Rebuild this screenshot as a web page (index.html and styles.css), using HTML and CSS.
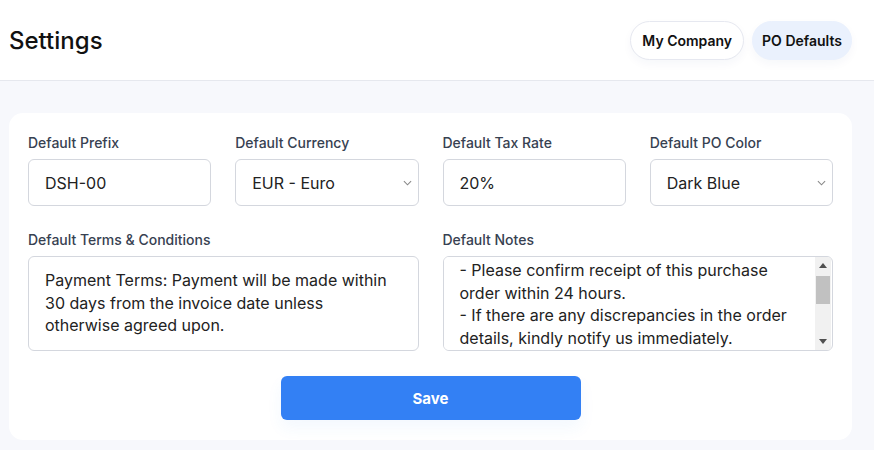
FILE: index.html
```html
<!DOCTYPE html>
<html lang="en">
<head>
  <meta charset="UTF-8" />
  <meta name="viewport" content="width=device-width, initial-scale=1" />
  <title>Settings</title>
  <link rel="stylesheet" href="styles.css">
</head>
<body>
  <header class="topbar">
    <h1>Settings</h1>
    <nav class="tabs">
      <button class="tab">My Company</button>
      <button class="tab active">PO Defaults</button>
    </nav>
  </header>

  <main class="content">
    <form class="card" onsubmit="return false">
      <div class="grid">
        <div class="field">
          <label for="prefix">Default Prefix</label>
          <input id="prefix" type="text" value="DSH-00" />
        </div>
        <div class="field">
          <label for="currency">Default Currency</label>
          <select id="currency">
            <option>EUR - Euro</option>
            <option>USD - US Dollar</option>
            <option>GBP - British Pound</option>
          </select>
        </div>
        <div class="field">
          <label for="tax">Default Tax Rate</label>
          <input id="tax" type="text" value="20%" />
        </div>
        <div class="field">
          <label for="color">Default PO Color</label>
          <select id="color">
            <option>Dark Blue</option>
            <option>Green</option>
            <option>Red</option>
          </select>
        </div>
        <div class="field wide">
          <label for="terms">Default Terms &amp; Conditions</label>
          <textarea id="terms">Payment Terms: Payment will be made within 30 days from the invoice date unless otherwise agreed upon.</textarea>
        </div>
        <div class="field wide">
          <label for="notes">Default Notes</label>
          <div class="notes-box">
            <textarea id="notes">- Please confirm receipt of this purchase order within 24 hours.
- If there are any discrepancies in the order details, kindly notify us immediately.
- Goods must be delivered to the address specified above.
- Invoices must reference this purchase order number.</textarea>
            <div class="scrollbar">
              <span class="sb-btn up"></span>
              <div class="sb-track"><div class="sb-thumb"></div></div>
              <span class="sb-btn down"></span>
            </div>
          </div>
        </div>
      </div>
      <div class="actions">
        <button class="save" type="submit">Save</button>
      </div>
    </form>
  </main>

  <script src="script.js"></script>
</body>
</html>
```

FILE: styles.css
```css
* {
  box-sizing: border-box;
}
body {
  margin: 0;
  font-family: Inter, "Noto Sans", sans-serif;
  background: #f7f8fc;
  color: #111;
}
.topbar {
  height: 81px;
  background: #fff;
  border-bottom: 1px solid #e6e8ee;
  display: flex;
  align-items: center;
  justify-content: space-between;
  padding: 0 22px 0 9px;
}
.topbar h1 {
  margin: 0;
  font-size: 24px;
  font-weight: 500;
}
.tabs {
  display: flex;
  gap: 8px;
  margin-top: 1px;
}
.tab {
  font-family: inherit;
  font-size: 14px;
  font-weight: 600;
  color: #111;
  height: 39px;
  padding: 0 11px;
  border-radius: 20px;
  border: 1px solid #e6e8f0;
  background: #fff;
  box-shadow: 0 4px 10px rgba(30, 60, 120, 0.04);
  cursor: pointer;
}
.tab.active {
  background: #eaf1fd;
  border-color: #eaf1fd;
  padding: 0 9px;
}
.content {
  padding: 32px 22px 10px 9px;
}
.card {
  background: #fff;
  border-radius: 14px;
  padding: 20px 19px 20px 19px;
}
.grid {
  display: grid;
  grid-template-columns: repeat(4, minmax(0, 1fr));
  column-gap: 24px;
  row-gap: 24px;
}
.field {
  display: flex;
  flex-direction: column;
  min-width: 0;
}
.field.wide {
  grid-column: span 2;
}
label {
  font-size: 14px;
  font-weight: 500;
  color: #374151;
  line-height: 20px;
  margin-bottom: 6px;
}
input,
select,
textarea {
  width: 100%;
  font-family: Inter, "Noto Sans", sans-serif;
  font-size: 16px;
  color: #222;
  border: 1px solid #d4d7de;
  border-radius: 6px;
  background: #fff;
  outline: none;
}
input,
select {
  height: 47px;
  padding: 0 16px;
}
select {
  appearance: none;
  -webkit-appearance: none;
  background-image: url("data:image/svg+xml,%3Csvg xmlns='http://www.w3.org/2000/svg' width='10' height='6' viewBox='0 0 10 6'%3E%3Cpath d='M1 1l4 4 4-4' fill='none' stroke='%23888' stroke-width='1.2'/%3E%3C/svg%3E");
  background-repeat: no-repeat;
  background-position: right 6px center;
  background-size: 9px 6px;
}
textarea {
  height: 95px;
  padding: 12px 16px;
  line-height: 22.5px;
  resize: none;
}
.notes-box {
  display: flex;
  height: 95px;
  border: 1px solid #d4d7de;
  border-radius: 6px;
  overflow: hidden;
  background: #fff;
}
.notes-box textarea {
  flex: 1;
  height: 100%;
  border: none;
  border-radius: 0;
  overflow: hidden;
  padding-top: 11px;
}
.scrollbar {
  width: 16px;
  margin-right: 1px;
  background: #f1f1f1;
  display: flex;
  flex-direction: column;
}
.sb-btn {
  height: 17px;
  display: flex;
  align-items: center;
  justify-content: center;
}
.sb-btn::before {
  content: "";
  border-left: 4px solid transparent;
  border-right: 4px solid transparent;
}
.sb-btn.up::before {
  border-bottom: 5px solid #505050;
}
.sb-btn.down::before {
  border-top: 5px solid #505050;
}
.sb-track {
  flex: 1;
  padding: 2px 1px 0;
}
.sb-thumb {
  height: 28px;
  background: #c1c1c1;
}
.actions {
  display: flex;
  justify-content: center;
  margin-top: 25px;
}
.save {
  width: 300px;
  height: 44px;
  border: none;
  border-radius: 6px;
  background: #3380f4;
  color: #fff;
  font-family: inherit;
  font-size: 15px;
  font-weight: 700;
  box-shadow: 0 8px 16px rgba(51, 128, 244, 0.06);
  cursor: pointer;
}
```

FILE: script.js
```js
// Notes-Feld etwas gescrollt anzeigen
const notes = document.getElementById('notes');
notes.scrollTop = 9;
```
